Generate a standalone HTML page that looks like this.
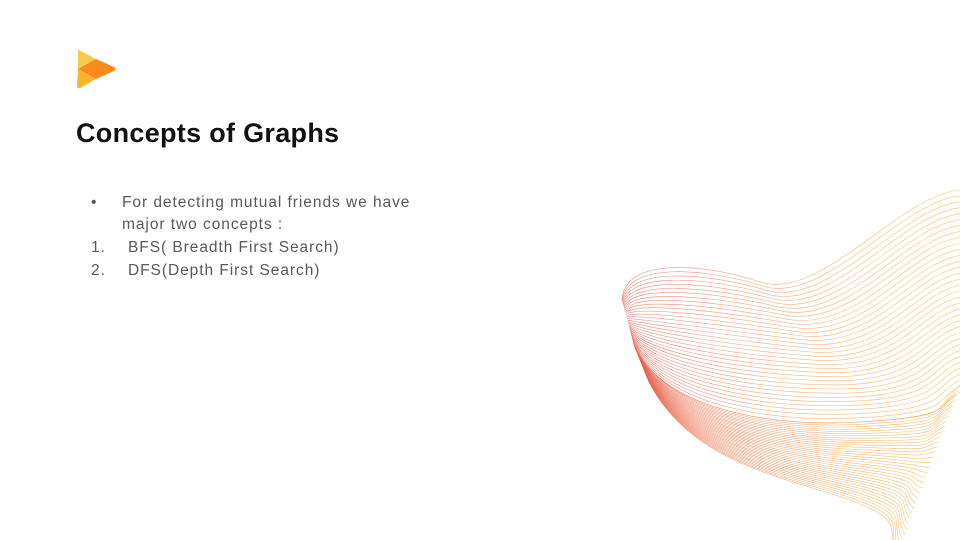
<!DOCTYPE html>
<html><head><meta charset="utf-8"><style>
html,body{margin:0;padding:0;background:#fff;}
#s{position:relative;width:960px;height:540px;overflow:hidden;font-family:"Liberation Sans",sans-serif;}
h1{position:absolute;left:76px;top:118px;margin:0;font-size:27px;font-weight:bold;color:#111;letter-spacing:0.3px;}
.t{position:absolute;font-size:15.5px;color:#595959;letter-spacing:0.95px;white-space:nowrap;}
</style></head><body><div id="s">
<svg style="position:absolute;left:70px;top:45px" width="50" height="50" viewBox="0 0 50 50">
<path d="M8 6 Q6 4 9 5 L26 14 L12 24 L8 24 Z" fill="#fcca4a"/>
<path d="M8 24 L26 14 L44 22 Q47 24 44 26 L26 34 Z" fill="#fb8a1c"/>
<path d="M8 24 L26 34 L10 43 Q7 44 7 41 Z" fill="#fdb32a"/>
</svg>
<h1>Concepts of Graphs</h1>
<div class="t" style="left:91px;top:194px">•</div>
<div class="t" style="left:122px;top:194px">For detecting mutual friends we have</div>
<div class="t" style="left:122px;top:216px">major two concepts :</div>
<div class="t" style="left:91px;top:239px">1.</div>
<div class="t" style="left:128px;top:239px">BFS( Breadth First Search)</div>
<div class="t" style="left:91px;top:262px">2.</div>
<div class="t" style="left:128px;top:262px">DFS(Depth First Search)</div>
<svg id="w" style="position:absolute;left:0;top:0" width="960" height="540"></svg>
</div>
<script>
var svg=document.getElementById('w');
var h='<defs><linearGradient id="g" gradientUnits="userSpaceOnUse" x1="620" y1="0" x2="960" y2="0"><stop offset="0" stop-color="#e4574a"/><stop offset="0.5" stop-color="#f19a5a"/><stop offset="1" stop-color="#f2b43c"/></linearGradient></defs>';
function L(a,b,t){return a+(b-a)*t;}
function P(a,b,t){return [L(a[0],b[0],t).toFixed(1),L(a[1],b[1],t).toFixed(1)];}
var N=34;
var A=[[622,300],[624,258],[700,262],[760,282],[830,245],[900,195],[960,190]];
var B=[[634,345],[660,405],[760,428],[860,422],[900,418],[935,405],[960,392]];
for(var i=0;i<=N;i++){var t=i/N,p=A.map(function(a,k){return P(a,B[k],t);});
h+='<path d="M'+p[0]+' C'+p[1]+' '+p[2]+' '+p[3]+' S'+p[5]+' '+p[6]+'" fill="none" stroke="url(#g)" stroke-width="0.6" opacity="0.75"/>';}
var C=[[634,345],[660,405],[760,428],[860,422],[930,410],[960,385]];
var D=[[648,380],[690,465],[790,478],[850,500],[885,530],[895,560]];
for(var i=0;i<=N;i++){var t=i/N,p=C.map(function(a,k){return P(a,D[k],t);});
h+='<path d="M'+p[0]+' C'+p[1]+' '+p[2]+' '+p[3]+' S'+p[4]+' '+p[5]+'" fill="none" stroke="url(#g)" stroke-width="0.6" opacity="0.75"/>';}
svg.innerHTML=h;
</script>
</body></html>
